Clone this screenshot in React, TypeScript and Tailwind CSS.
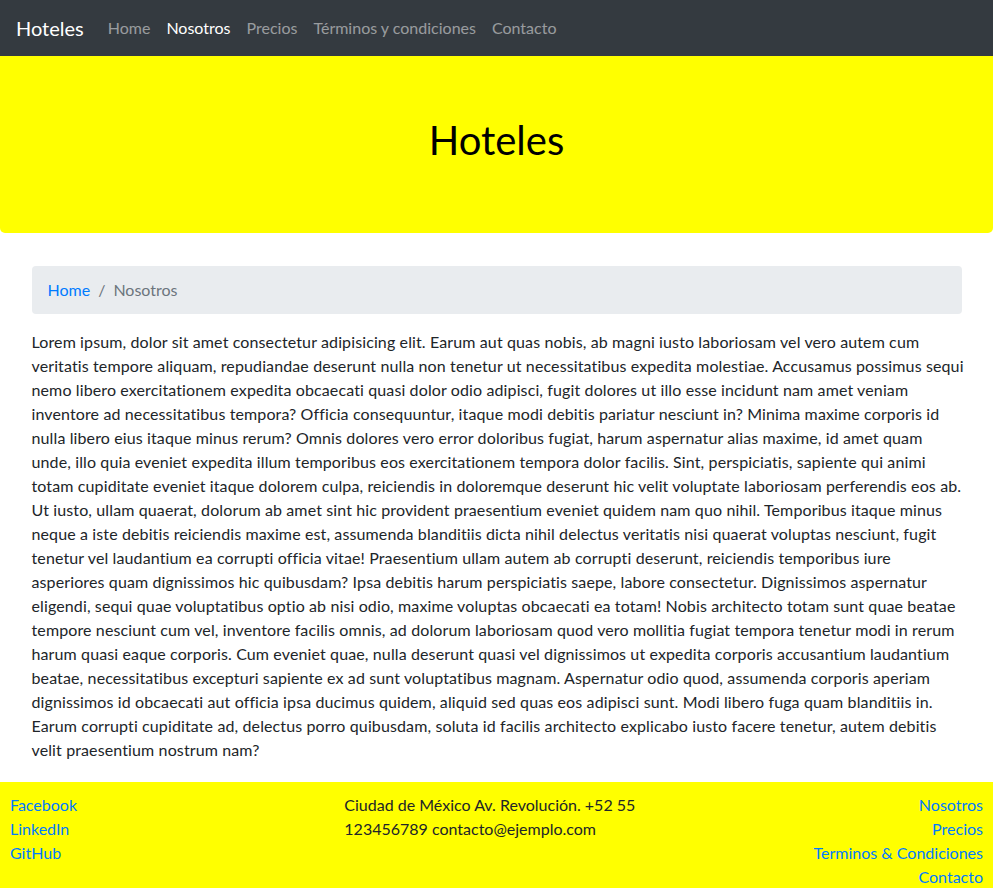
import React from "react";

const lines = [
  "Lorem ipsum, dolor sit amet consectetur adipisicing elit. Earum aut quas nobis, ab magni iusto laboriosam vel vero autem cum",
  "veritatis tempore aliquam, repudiandae deserunt nulla non tenetur ut necessitatibus expedita molestiae. Accusamus possimus sequi",
  "nemo libero exercitationem expedita obcaecati quasi dolor odio adipisci, fugit dolores ut illo esse incidunt nam amet veniam",
  "inventore ad necessitatibus tempora? Officia consequuntur, itaque modi debitis pariatur nesciunt in? Minima maxime corporis id",
  "nulla libero eius itaque minus rerum? Omnis dolores vero error doloribus fugiat, harum aspernatur alias maxime, id amet quam",
  "unde, illo quia eveniet expedita illum temporibus eos exercitationem tempora dolor facilis. Sint, perspiciatis, sapiente qui animi",
  "totam cupiditate eveniet itaque dolorem culpa, reiciendis in doloremque deserunt hic velit voluptate laboriosam perferendis eos ab.",
  "Ut iusto, ullam quaerat, dolorum ab amet sint hic provident praesentium eveniet quidem nam quo nihil. Temporibus itaque minus",
  "neque a iste debitis reiciendis maxime est, assumenda blanditiis dicta nihil delectus veritatis nisi quaerat voluptas nesciunt, fugit",
  "tenetur vel laudantium ea corrupti officia vitae! Praesentium ullam autem ab corrupti deserunt, reiciendis temporibus iure",
  "asperiores quam dignissimos hic quibusdam? Ipsa debitis harum perspiciatis saepe, labore consectetur. Dignissimos aspernatur",
  "eligendi, sequi quae voluptatibus optio ab nisi odio, maxime voluptas obcaecati ea totam! Nobis architecto totam sunt quae beatae",
  "tempore nesciunt cum vel, inventore facilis omnis, ad dolorum laboriosam quod vero mollitia fugiat tempora tenetur modi in rerum",
  "harum quasi eaque corporis. Cum eveniet quae, nulla deserunt quasi vel dignissimos ut expedita corporis accusantium laudantium",
  "beatae, necessitatibus excepturi sapiente ex ad sunt voluptatibus magnam. Aspernatur odio quod, assumenda corporis aperiam",
  "dignissimos id obcaecati aut officia ipsa ducimus quidem, aliquid sed quas eos adipisci sunt. Modi libero fuga quam blanditiis in.",
  "Earum corrupti cupiditate ad, delectus porro quibusdam, soluta id facilis architecto explicabo iusto facere tenetur, autem debitis",
  "velit praesentium nostrum nam?",
];

export default function App() {
  return (
    <div
      className="w-[993px] bg-white text-[16px] leading-[24px] text-[#212529]"
      style={{ fontFamily: "Lato, 'Noto Sans', sans-serif" }}
    >
      <nav className="flex h-14 items-center bg-[#343a40] px-4">
        <span className="mr-4 text-[20px] leading-[30px] text-white">Hoteles</span>
        <a className="px-2 text-white/50">Home</a>
        <a className="px-2 text-white">Nosotros</a>
        <a className="px-2 text-white/50">Precios</a>
        <a className="px-2 text-white/50">Términos y condiciones</a>
        <a className="px-2 text-white/50">Contacto</a>
      </nav>

      <div className="rounded-b-[5px] bg-[#ffff00] pt-[60px] pb-[68px] text-center">
        <h1 className="text-[40px] leading-[49px] text-black">Hoteles</h1>
      </div>

      <div className="mx-auto mt-[33px] w-[930px]">
        <div className="mb-4 flex h-12 items-center rounded bg-[#e9ecef] px-4">
          <a className="text-[#007bff]">Home</a>
          <span className="px-2 text-[#6c757d]">/</span>
          <span className="text-[#6c757d]">Nosotros</span>
        </div>
        <p className="mb-4 tracking-[0.12px]">
          {lines.map((l, i) => (
            <span key={i} className="block whitespace-nowrap">
              {l}
            </span>
          ))}
        </p>
      </div>

      <footer className="mt-5 grid grid-cols-3 bg-[#ffff00] px-[10px] pt-[11px] pb-2">
        <div className="flex flex-col items-start">
          <a className="text-[#007bff]">Facebook</a>
          <a className="text-[#007bff]">LinkedIn</a>
          <a className="text-[#007bff]">GitHub</a>
        </div>
        <div className="pl-[10px] pr-[20px]">
          Ciudad de México Av. Revolución. +52 55 123456789 contacto@ejemplo.com
        </div>
        <div className="flex flex-col items-end">
          <a className="text-[#007bff]">Nosotros</a>
          <a className="text-[#007bff]">Precios</a>
          <a className="text-[#007bff]">Terminos &amp; Condiciones</a>
          <a className="text-[#007bff]">Contacto</a>
        </div>
      </footer>
    </div>
  );
}
